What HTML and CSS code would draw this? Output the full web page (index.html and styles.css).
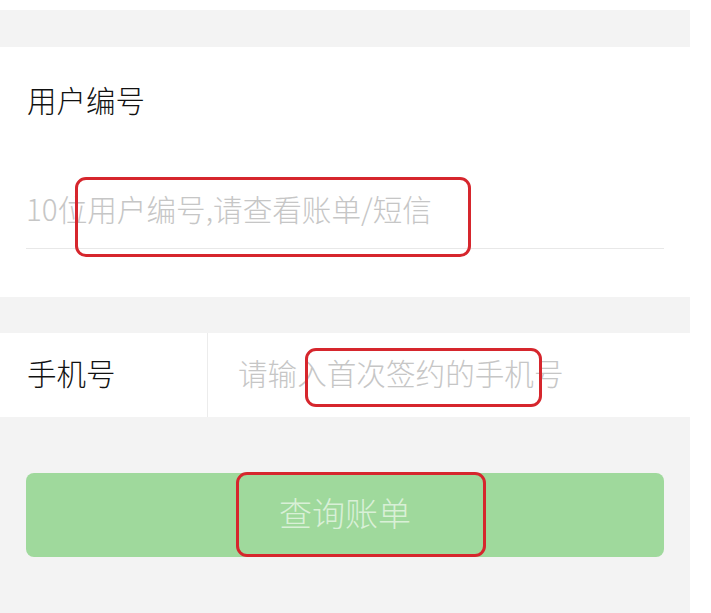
FILE: index.html
```html
<!DOCTYPE html>
<html lang="zh-CN">
<head>
<meta charset="utf-8">
<title>查询账单</title>
<link rel="stylesheet" href="styles.css">
</head>
<body>
<div class="page">
  <section class="panel">
    <div class="label">用户编号</div>
    <div class="field"><input class="input" type="text" placeholder="10位用户编号,请查看账单/短信"></div>
  </section>
  <section class="row">
    <div class="row-label">手机号</div>
    <div class="row-field"><input class="input" type="text" placeholder="请输入首次签约的手机号"></div>
  </section>
  <div class="actions">
    <button class="btn" type="button">查询账单</button>
  </div>
</div>
<div class="mark mark-1"></div>
<div class="mark mark-2"></div>
<div class="mark mark-3"></div>
</body>
</html>
```
FILE: styles.css
```css
html, body {
  margin: 0;
  padding: 0;
  background: #ffffff;
  font-family: "Noto Sans CJK SC", "Noto Sans", sans-serif;
  font-weight: 300;
  color: #111111;
}
body {
  position: relative;
  width: 711px;
  height: 613px;
  overflow: hidden;
}
.page {
  width: 690px;
  margin-top: 10px;
  padding-top: 37px;
  background: #f3f3f3;
  height: 566px;
  box-sizing: content-box;
}
.panel {
  background: #ffffff;
  padding: 30px 26px 48px 27px;
}
.label {
  height: 46px;
  line-height: 44px;
  font-size: 29.5px;
}
.field {
  margin-top: 49px;
  border-bottom: 1px solid #e8e8e8;
  margin-left: -1px;
}
.input {
  display: block;
  width: 100%;
  box-sizing: border-box;
  border: none;
  outline: none;
  background: transparent;
  padding: 0 0 4px 0;
  height: 76px;
  font-family: "Noto Sans CJK SC", "Noto Sans", sans-serif;
  font-weight: 300;
  font-size: 29.6px;
  color: #111111;
}
.input::placeholder {
  color: #c6c6c6;
}
.row {
  margin-top: 36px;
  background: #ffffff;
  display: flex;
  height: 84px;
}
.row-label {
  width: 180px;
  padding-left: 27px;
  line-height: 78px;
  font-size: 29.5px;
  border-right: 1px solid #ececec;
}
.row-field {
  flex: 1;
  padding-left: 30px;
  display: flex;
  align-items: center;
}
.row-field .input {
  height: 84px;
  padding-bottom: 6px;
}
.actions {
  padding: 56px 26px 0 26px;
}
.btn {
  display: block;
  width: 100%;
  height: 84px;
  border: none;
  border-radius: 8px;
  background: #9fd99c;
  color: #d9f0d7;
  font-family: "Noto Sans CJK SC", "Noto Sans", sans-serif;
  font-weight: 300;
  font-size: 33px;
  padding: 0 0 7px 0;
}
.mark {
  position: absolute;
  border: 3px solid #d6262d;
  border-radius: 11px;
  box-sizing: border-box;
}
.mark-1 { left: 75px; top: 177px; width: 396px; height: 80px; }
.mark-2 { left: 305px; top: 348px; width: 237px; height: 59px; }
.mark-3 { left: 236px; top: 472px; width: 250px; height: 85px; }
```
